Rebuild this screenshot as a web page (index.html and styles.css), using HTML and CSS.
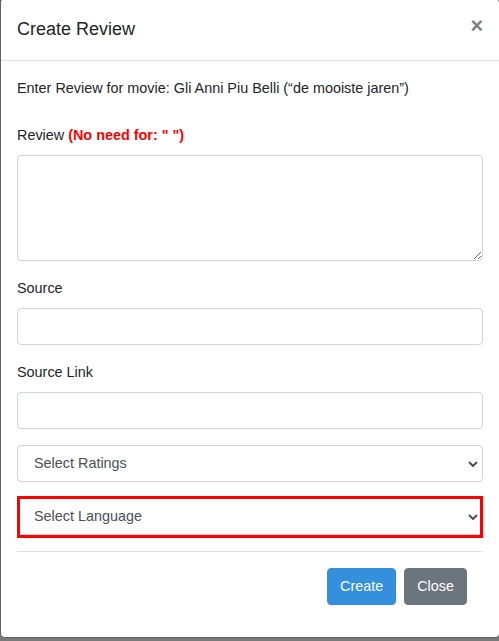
FILE: index.html
```html
<!DOCTYPE html>
<html lang="en">
<head>
<meta charset="utf-8">
<title>Create Review</title>
<link rel="stylesheet" href="styles.css">
</head>
<body>
<div class="modal-content">
  <div class="modal-header">
    <h5 class="modal-title">Create Review</h5>
    <button type="button" class="close">×</button>
  </div>
  <div class="modal-body">
    <p class="intro">Enter Review for movie: Gli Anni Piu Belli (“de mooiste jaren”)</p>
    <form>
      <div class="form-group">
        <label>Review <span class="hint">(No need for: " ")</span></label>
        <textarea class="form-control" rows="4"></textarea>
      </div>
      <div class="form-group">
        <label>Source</label>
        <input type="text" class="form-control">
      </div>
      <div class="form-group">
        <label>Source Link</label>
        <input type="text" class="form-control">
      </div>
      <div class="select-wrap ratings">
        <select class="form-control select">
          <option>Select Ratings</option>
        </select>
        <svg class="chevron" width="10" height="6" viewBox="0 0 10 6"><path d="M1 1 L5 5 L9 1" fill="none" stroke="#505050" stroke-width="2"/></svg>
      </div>
      <div class="select-wrap lang-box">
        <select class="select lang-select">
          <option>Select Language</option>
        </select>
        <svg class="chevron lang-chevron" width="10" height="6" viewBox="0 0 10 6"><path d="M1 1 L5 5 L9 1" fill="none" stroke="#505050" stroke-width="2"/></svg>
      </div>
      <div class="modal-footer">
        <button type="button" class="btn btn-primary">Create</button>
        <button type="button" class="btn btn-secondary">Close</button>
      </div>
    </form>
  </div>
</div>
</body>
</html>
```

FILE: styles.css
```css
html {
  overflow: hidden;
}

body {
  margin: 0;
  background: #7a7a7a;
  font-family: "Liberation Sans", Arial, sans-serif;
  font-size: 14.4px;
  line-height: 1.6;
  color: #212529;
}

.modal-content {
  width: 500px;
  box-sizing: border-box;
  margin-top: -2px;
  background: #fff;
  background-clip: padding-box;
  border: 1px solid rgba(0, 0, 0, 0.2);
  border-radius: 4.8px;
}

.modal-header {
  display: flex;
  align-items: flex-start;
  justify-content: space-between;
  padding: 16px;
  border-bottom: 1px solid #dee2e6;
}

.modal-title {
  margin: 0;
  font-size: 18px;
  font-weight: 400;
  line-height: 1.6;
}

.close {
  padding: 16px;
  margin: -16px -16px -16px auto;
  background: transparent;
  border: 0;
  font-family: inherit;
  font-size: 21.6px;
  font-weight: 700;
  line-height: 1;
  color: #000;
  opacity: 0.5;
}

.modal-body {
  padding: 16px;
}

.intro {
  margin: 0 0 24px;
}

.form-group {
  margin-bottom: 16px;
}

label {
  display: inline-block;
  margin-bottom: 8px;
}

.hint {
  color: #ff0000;
  font-weight: 700;
}

.form-control {
  display: block;
  width: 100%;
  box-sizing: border-box;
  height: 37px;
  margin: 0;
  padding: 6px 12px;
  font-family: inherit;
  font-size: 14.4px;
  line-height: 1.6;
  color: #495057;
  background: #fff;
  border: 1px solid #ced4da;
  border-radius: 4px;
}

textarea.form-control {
  height: auto;
  resize: vertical;
}

.select-wrap {
  position: relative;
}

.select {
  -webkit-appearance: none;
  appearance: none;
  padding-left: 16px;
}

.ratings {
  margin-bottom: 14px;
}

.chevron {
  position: absolute;
  right: 5px;
  top: 50%;
  margin-top: -3px;
}

.lang-box {
  border: 3px solid #ff0000;
  margin-bottom: 13px;
}

.lang-select {
  display: block;
  width: 100%;
  box-sizing: border-box;
  height: 36px;
  margin: 0;
  padding: 0 12px 0 14px;
  font-family: inherit;
  font-size: 14.4px;
  line-height: 1.6;
  color: #495057;
  background: #fff;
  border: 0;
  border-bottom: 1px solid #ced4da;
  border-radius: 0;
}

.lang-chevron {
  right: 2px;
}

.modal-footer {
  display: flex;
  justify-content: flex-end;
  align-items: center;
  padding: 12px;
  border-top: 1px solid #dee2e6;
}

.btn {
  margin: 4px;
  padding: 6px 12px;
  font-family: inherit;
  font-size: 14.4px;
  line-height: 1.6;
  color: #fff;
  border: 1px solid transparent;
  border-radius: 4px;
}

.btn-primary {
  background: #3490dc;
  border-color: #3490dc;
}

.btn-secondary {
  background: #6c757d;
  border-color: #6c757d;
}
```
